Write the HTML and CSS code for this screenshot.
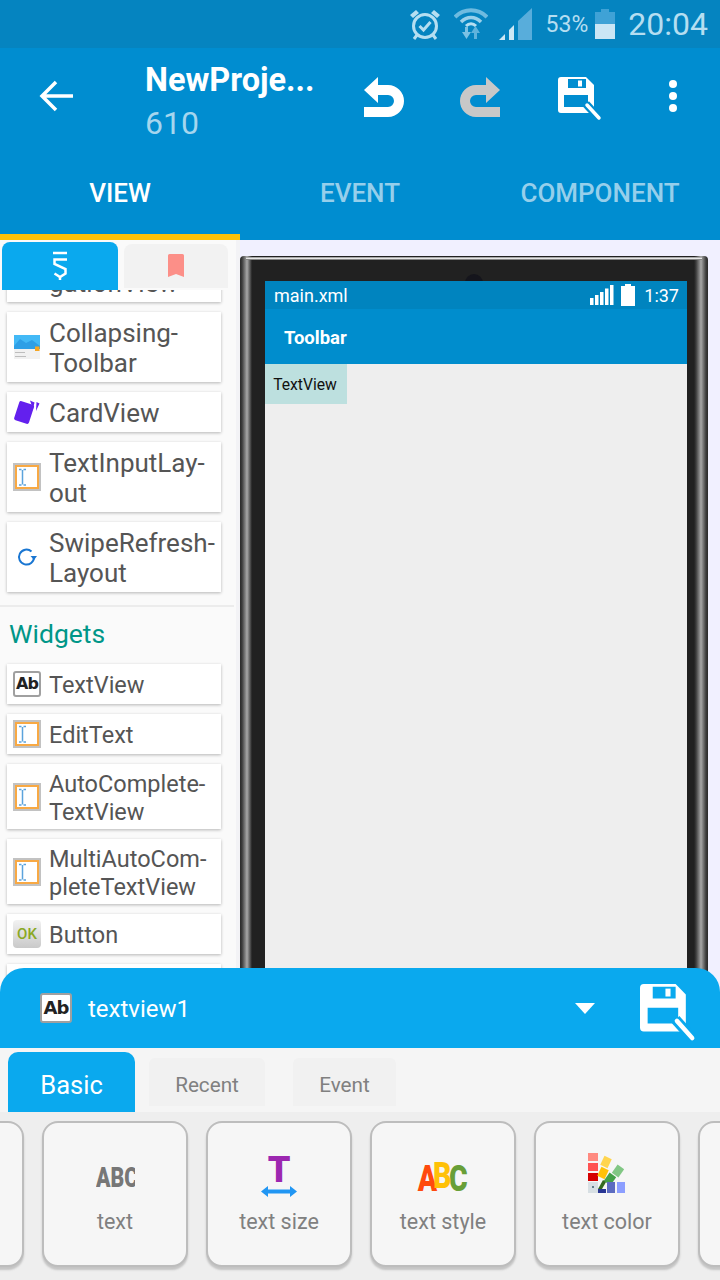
FILE: index.html
```html
<!DOCTYPE html>
<html lang="en">
<head>
    <meta charset="UTF-8">
    <meta name="viewport" content="width=device-width, initial-scale=1.0">
    <title>Sketchware view editor</title>
    <link rel="stylesheet" href="styles.css">
</head>
<body>
    <svg class="defs" width="0" height="0">
        <symbol id="floppy" viewBox="0 0 44 44">
            <path fill="#fff" fill-rule="evenodd" d="M3 0H28L36 8V33a3 3 0 0 1-3 3H3a3 3 0 0 1-3-3V3a3 3 0 0 1 3-3ZM10 2V11H28V2ZM6 18V30H30V18Z"/>
            <rect x="20" y="3.500" width="4" height="6" fill="#fff"/>
            <path d="M28 27L41 41" stroke="var(--halo)" stroke-width="8"/>
            <path d="M29 28L41 41" stroke="#fff" stroke-width="3.500" stroke-linecap="round"/>
        </symbol>
        <symbol id="input" viewBox="0 0 28 28">
            <rect width="28" height="28" fill="#c2c2c2"/>
            <rect x="3" y="3" width="22" height="22" fill="#fff" stroke="#f8a944" stroke-width="2"/>
            <path d="M6 6.500h2.500M13 6.500h-2.500M9.500 7v14.500M6 22h2.500M13 22h-2.500" fill="none" stroke="#5ba3dc" stroke-width="1.500"/>
        </symbol>
    </svg>

    <div class="app">
        <div class="status-bar">
            <svg class="st-alarm" width="32" height="32" viewBox="0 0 32 32" fill="none" stroke="#b5def1">
                <circle cx="16" cy="18" r="11.500" stroke-width="3"/>
                <path d="M10.500 18l4 4 7-8" stroke-width="3"/>
                <path d="M1 7l6-5 3 3-6 5ZM31 7l-6-5-3 3 6 5Z" fill="#b5def1" stroke="none"/>
                <path d="M8 27l-3 4M24 27l3 4" stroke-width="3"/>
            </svg>
            <svg class="st-wifi" width="34" height="34" viewBox="0 0 34 34" fill="none">
                <path d="M1 10C10 1 24 1 33 10" stroke="#6ebbe0" stroke-width="4"/>
                <path d="M7 15C13 9 21 9 27 15" stroke="#9ad0ea" stroke-width="3.500"/>
                <path d="M12 19C15 16 19 16 22 19" stroke="#b5def1" stroke-width="3"/>
                <path d="M8 25h3v-5h3v5h3l-4.500 7Z" fill="#7cc2e4"/>
                <path d="M17 26l4.500-7 4.500 7h-3v6h-3v-6Z" fill="#5fb3dc"/>
            </svg>
            <svg class="st-signal" width="33" height="32" viewBox="0 0 33 32">
                <path d="M0 32L6 26V32Z" fill="#cde8f5"/>
                <path d="M10 22L15 17V32H10Z" fill="#cde8f5"/>
                <path d="M19 13L33 0V32H19Z" fill="#58addb"/>
            </svg>
            <span class="st-percent">53%</span>
            <svg class="st-battery" width="20" height="30" viewBox="0 0 20 30">
                <path d="M0 3H6V0H14V3H20V15H0Z" fill="#3fa2d6"/>
                <rect y="15" width="20" height="15" fill="#cae6f5"/>
            </svg>
            <span class="st-time">20:04</span>
        </div>

        <header class="top-bar">
            <button class="icon-btn back-btn">
                <svg width="36" height="32" viewBox="0 0 36 32" fill="none" stroke="#fff" stroke-width="3.500">
                    <path d="M34 16H3M17 2L3 16L17 30"/>
                </svg>
            </button>
            <div class="title-block">
                <div class="title">NewProje...</div>
                <div class="subtitle">610</div>
            </div>
            <svg class="act-undo" width="40" height="40" viewBox="0 0 40 40">
                <path fill="#fff" d="M0 13L14 0V8H24A16 16 0 0 1 24 40H0V30H24A6 6 0 0 0 24 18H14V26Z"/>
            </svg>
            <svg class="act-redo" width="40" height="40" viewBox="0 0 40 40">
                <path fill="#c8c8c8" d="M40 13L26 0V8H16A16 16 0 0 0 16 40H40V30H16A6 6 0 0 1 16 18H26V26Z"/>
            </svg>
            <svg class="act-save" width="44" height="44"><use href="#floppy"/></svg>
            <div class="act-more"><i></i><i></i><i></i></div>
        </header>

        <nav class="main-tabs">
            <div class="main-tab active">VIEW</div>
            <div class="main-tab">EVENT</div>
            <div class="main-tab">COMPONENT</div>
        </nav>

        <div class="workspace">
            <aside class="palette">
                <div class="palette-tabs">
                    <div class="palette-tab active">
                        <svg width="20" height="30" viewBox="0 0 20 30" fill="none" stroke="#fff" stroke-width="2.500">
                            <path d="M3 2H17"/>
                            <path d="M17 8.500H4.500V13L15.500 18V22.500L10 26L4.500 22.500"/>
                            <path d="M10 26V29"/>
                        </svg>
                    </div>
                    <div class="palette-tab">
                        <svg width="16" height="24" viewBox="0 0 16 24"><path fill="#fc8f88" d="M1.500 0H14.500A1.500 1.500 0 0 1 16 1.500V23L8 20L0 23V1.500A1.500 1.500 0 0 1 1.500 0Z"/></svg>
                    </div>
                </div>
                <div class="palette-scroll">
                    <div class="palette-list">
                        <div class="item tall"><span class="item-icon"></span><span class="item-text">Navi-<br>gationView</span></div>
                        <div class="item tall">
                            <span class="item-icon">
                                <svg width="26" height="24" viewBox="0 0 26 24">
                                    <rect width="26" height="24" fill="#f1f1f1"/>
                                    <rect width="26" height="14" fill="#43b9f6"/>
                                    <path d="M0 11L6 4L12 8L18 5L26 11V14H0Z" fill="#2e9fe6"/>
                                    <rect x="21" y="11.500" width="4.500" height="4.500" fill="#f5a623"/>
                                    <path d="M1 17.500H11M1 21.500H12" stroke="#bdbdbd" stroke-width="1"/>
                                </svg>
                            </span>
                            <span class="item-text">Collapsing-<br>Toolbar</span>
                        </div>
                        <div class="item">
                            <span class="item-icon">
                                <svg width="26" height="24" viewBox="0 0 26 24">
                                    <rect x="2.500" y="2.500" width="15.500" height="20" rx="2" fill="#6320ee" transform="rotate(18 10 12)"/>
                                    <path d="M16 0.500L20.500 2.500L19 9ZM22.500 2L25.500 3.500L22 11Z" fill="#6320ee"/>
                                </svg>
                            </span>
                            <span class="item-text">CardView</span>
                        </div>
                        <div class="item tall">
                            <span class="item-icon"><svg width="28" height="28"><use href="#input"/></svg></span>
                            <span class="item-text">TextInputLay-<br>out</span>
                        </div>
                        <div class="item tall">
                            <span class="item-icon">
                                <svg width="22" height="22" viewBox="0 0 22 22" fill="none">
                                    <path d="M18 11A7.500 7.500 0 1 1 15.500 5.500" stroke="#1976d2" stroke-width="2"/>
                                    <path d="M14.500 10H21L18 14Z" fill="#1976d2"/>
                                </svg>
                            </span>
                            <span class="item-text">SwipeRefresh-<br>Layout</span>
                        </div>
                        <div class="group-title">Widgets</div>
                        <div class="item sm">
                            <span class="item-icon"><span class="ab-box">Ab</span></span>
                            <span class="item-text">TextView</span>
                        </div>
                        <div class="item sm">
                            <span class="item-icon"><svg width="28" height="28"><use href="#input"/></svg></span>
                            <span class="item-text">EditText</span>
                        </div>
                        <div class="item sm mid">
                            <span class="item-icon"><svg width="28" height="28"><use href="#input"/></svg></span>
                            <span class="item-text">AutoComplete-<br>TextView</span>
                        </div>
                        <div class="item sm mid">
                            <span class="item-icon"><svg width="28" height="28"><use href="#input"/></svg></span>
                            <span class="item-text">MultiAutoCom-<br>pleteTextView</span>
                        </div>
                        <div class="item sm">
                            <span class="item-icon"><span class="ok-box">OK</span></span>
                            <span class="item-text">Button</span>
                        </div>
                        <div class="item sm"><span class="item-icon"></span><span class="item-text">ImageView</span></div>
                    </div>
                </div>
            </aside>

            <section class="preview">
                <div class="phone">
                    <i class="phone-edge"></i>
                    <i class="phone-camera"></i>
                    <div class="screen">
                        <div class="screen-status">
                            <span class="screen-file">main.xml</span>
                            <svg width="24" height="20" viewBox="0 0 24 20" fill="#fff">
                                <rect y="13" width="3.500" height="7"/>
                                <rect x="5" y="10" width="3.500" height="10"/>
                                <rect x="10" y="7" width="3.500" height="13"/>
                                <rect x="15" y="3.500" width="3.500" height="16.500"/>
                                <rect x="20" y="0" width="3.500" height="20"/>
                            </svg>
                            <svg class="screen-batt" width="14" height="22" viewBox="0 0 14 22" fill="#fff">
                                <path d="M4 0H10V2H14V22H0V2H4Z"/>
                            </svg>
                            <span class="screen-time">1:37</span>
                        </div>
                        <div class="screen-toolbar">Toolbar</div>
                        <div class="screen-textview">TextView</div>
                    </div>
                </div>
            </section>
        </div>

        <div class="sheet">
            <div class="sheet-head">
                <span class="ab-box ab-box-big">Ab</span>
                <span class="sheet-name">textview1</span>
                <i class="sheet-caret"></i>
                <svg class="sheet-save" width="56" height="58" viewBox="0 0 44 44" preserveAspectRatio="none"><use href="#floppy"/></svg>
            </div>
            <div class="sheet-tabs">
                <div class="sheet-tab active">Basic</div>
                <div class="sheet-tab recent">Recent</div>
                <div class="sheet-tab event">Event</div>
            </div>
            <div class="props">
                <div class="prop"></div>
                <div class="prop">
                    <div class="prop-icon"><span class="abc-clip"><span class="abc-gray">ABC</span></span></div>
                    <div class="prop-label">text</div>
                </div>
                <div class="prop">
                    <div class="prop-icon size-icon">
                        <span class="big-t">T</span>
                        <svg width="36" height="11" viewBox="0 0 36 11">
                            <path fill="#2196f3" d="M0 5.500L7 0V3.500H29V0L36 5.500L29 11V7.500H7V11Z"/>
                        </svg>
                    </div>
                    <div class="prop-label">text size</div>
                </div>
                <div class="prop">
                    <div class="prop-icon"><span class="abc-color"><b class="c-a">A</b><b class="c-b">B</b><b class="c-c">C</b></span></div>
                    <div class="prop-label">text style</div>
                </div>
                <div class="prop">
                    <div class="prop-icon">
                        <svg width="38" height="40" viewBox="0 0 38 40">
                            <rect width="10" height="8" fill="#ff8a80"/>
                            <rect y="10" width="10" height="8" fill="#ff5252"/>
                            <rect y="20" width="10" height="8" fill="#d50000"/>
                            <rect y="29" width="10" height="11" fill="#d7dfe3"/>
                            <rect x="4" y="33" width="2" height="2" fill="#607d8b"/>
                            <rect x="14" y="4" width="8" height="10" fill="#ffd54f" transform="rotate(25 18 9)"/>
                            <rect x="11" y="15" width="8" height="10" fill="#ffc107" transform="rotate(25 15 20)"/>
                            <rect x="26" y="13" width="8" height="10" fill="#81c784" transform="rotate(35 30 18)"/>
                            <rect x="18" y="21" width="8" height="10" fill="#43a047" transform="rotate(35 22 26)"/>
                            <path d="M10 36L15 27L18 29L14 36Z" fill="#33691e"/>
                            <rect x="10" y="36" width="8" height="4" fill="#283593"/>
                            <rect x="19" y="29" width="8" height="11" fill="#5c6bc0"/>
                            <rect x="29" y="29" width="8" height="11" fill="#8c9eff"/>
                        </svg>
                    </div>
                    <div class="prop-label">text color</div>
                </div>
                <div class="prop"></div>
            </div>
        </div>
    </div>
</body>
</html>
```

FILE: styles.css
```css
html, body {
    margin: 0;
    padding: 0;
}
body {
    width: 720px;
    height: 1280px;
    overflow: hidden;
    font-family: Roboto, "Liberation Sans", sans-serif;
    background: #f1f0ff;
}
.defs {
    position: absolute;
}
.app {
    position: relative;
    width: 720px;
    height: 1280px;
    display: flex;
    flex-direction: column;
    overflow: hidden;
    --halo: #008dd0;
}

/* status bar */
.status-bar {
    height: 48px;
    flex: none;
    display: flex;
    align-items: center;
    justify-content: flex-end;
    padding-right: 12px;
    background: #0584c0;
    color: #b5def1;
}
.st-alarm {
    margin-right: 13px;
}
.st-wifi {
    margin-right: 11px;
}
.st-signal {
    margin-right: 14px;
}
.st-percent {
    font-size: 23px;
    margin-right: 7px;
}
.st-battery {
    margin-right: 13px;
}
.st-time {
    font-size: 32px;
}

/* top bar */
.top-bar {
    height: 96px;
    flex: none;
    display: flex;
    align-items: center;
    background: #008dd0;
}
.icon-btn {
    border: 0;
    padding: 0;
    background: none;
}
.back-btn {
    width: 37px;
    height: 32px;
    margin-left: 38px;
    margin-right: 70px;
}
.title-block {
    width: 219px;
    align-self: flex-start;
    padding-top: 14px;
}
.title {
    font-size: 32.500px;
    font-weight: 700;
    line-height: 36px;
    color: #fff;
}
.subtitle {
    font-size: 32px;
    line-height: 44px;
    margin-top: 3px;
    color: #a5d6ee;
}
.act-undo {
    margin-right: 56px;
    margin-top: 2px;
}
.act-redo {
    margin-right: 58px;
    margin-top: 2px;
}
.act-save {
    margin-right: 56px;
    margin-top: 6px;
}
.act-more {
    width: 30px;
    display: flex;
    flex-direction: column;
    align-items: center;
    gap: 4px;
    margin-top: -1px;
}
.act-more i {
    width: 8px;
    height: 8px;
    border-radius: 50%;
    background: #fff;
}

/* main tabs */
.main-tabs {
    height: 96px;
    flex: none;
    display: flex;
    background: #008dd0;
}
.main-tab {
    width: 240px;
    display: flex;
    align-items: center;
    justify-content: center;
    font-size: 26px;
    font-weight: 500;
    color: #96cfeb;
    box-sizing: border-box;
    padding-top: 2px;
}
.main-tab.active {
    color: #fff;
    border-bottom: 6px solid #ffc107;
    padding-top: 8px;
}

/* palette */
.workspace {
    flex: 1;
    display: flex;
    min-height: 0;
}
.palette {
    width: 240px;
    flex: none;
    box-sizing: border-box;
    display: flex;
    flex-direction: column;
    background: #fafafa;
    border-right: 4px solid #f3f3f6;
}
.palette-tabs {
    height: 50px;
    flex: none;
    display: flex;
    padding: 2px 0 0 2px;
    box-sizing: border-box;
    gap: 6px;
    position: relative;
    z-index: 2;
    background: #fafafa;
}
.palette-tab {
    width: 104px;
    height: 44px;
    margin-top: 2px;
    border-radius: 8px 8px 0 0;
    background: #f2f2f2;
    display: flex;
    align-items: center;
    justify-content: center;
}
.palette-tab.active {
    width: 116px;
    height: 48px;
    margin-top: 0;
    background: #0aa9ee;
}
.palette-scroll {
    flex: 1;
    overflow: hidden;
    min-height: 0;
}
.palette-list {
    margin-top: -58px;
    padding-left: 7px;
    display: flex;
    flex-direction: column;
    gap: 10px;
}
.item {
    width: 214px;
    height: 40px;
    flex: none;
    display: flex;
    align-items: center;
    background: #fff;
    box-shadow: 0 1px 3px rgba(0, 0, 0, 0.28);
    font-size: 26px;
    line-height: 30px;
    color: #555;
}
.item.tall {
    height: 70px;
}
.item.sm {
    font-size: 23.500px;
}
.item.mid {
    height: 65px;
    line-height: 28px;
}
.item-icon {
    width: 28px;
    margin-left: 6px;
    margin-right: 8px;
    flex: none;
    display: flex;
    align-items: center;
    justify-content: center;
}
.item-text {
    white-space: nowrap;
    padding-top: 1px;
}
.item.sm .item-text {
    padding-top: 2px;
}
.group-title {
    font-size: 26.500px;
    line-height: 30px;
    color: #009688;
    margin: 3px 0 0 -7px;
    padding: 12px 0 5px 9px;
    width: 234px;
    box-sizing: border-box;
    border-top: 2px solid #ececec;
}
.ab-box {
    width: 28px;
    height: 26px;
    box-sizing: border-box;
    border: 2px solid #a0a0a0;
    border-radius: 3px;
    background: #fff;
    display: inline-flex;
    align-items: center;
    justify-content: center;
    font-size: 16px;
    font-weight: 700;
    line-height: 1;
    color: #222;
    font-family: "DejaVu Sans", sans-serif;
    letter-spacing: -1px;
}
.ab-box-big {
    width: 32px;
    height: 30px;
    font-size: 18px;
    flex: none;
}
.ok-box {
    width: 28px;
    height: 28px;
    border-radius: 4px;
    background: linear-gradient(#f2f2f2, #c9c9c9);
    display: inline-flex;
    align-items: center;
    justify-content: center;
    font-size: 15px;
    font-weight: 500;
    color: #8aa825;
}

/* phone preview */
.preview {
    flex: 1;
    padding: 16px 12px 0 0;
    min-width: 0;
    background: #f1f0ff;
}
.phone {
    position: relative;
    height: 800px;
    box-sizing: border-box;
    padding: 25px 21px 0 25px;
    border-radius: 4px 4px 0 0;
    background:
        linear-gradient(90deg, #2a2a2a 0, #3c3c3c 2px, #a8a8a8 7px, #3c3c3c 11px, #212121 12px) left top / 14px 100% no-repeat,
        linear-gradient(90deg, #212121 0, #3c3c3c 2px, #a8a8a8 7px, #3c3c3c 12px, #2a2a2a 14px) right top / 14px 100% no-repeat,
        #212121;
}
.phone-edge {
    position: absolute;
    left: 6px;
    right: 6px;
    top: 1px;
    height: 3px;
    background: linear-gradient(#8a8a8a, #e6e6e6, #555);
}
.phone-camera {
    position: absolute;
    left: 225px;
    top: 18px;
    width: 18px;
    height: 18px;
    border-radius: 50%;
    background: #15151c;
}
.screen {
    position: relative;
    height: 100%;
    background: #eeeeee;
}
.screen-status {
    height: 28px;
    display: flex;
    align-items: center;
    gap: 8px;
    padding: 0 8px 0 9px;
    background: #0084bf;
    color: #fff;
    font-size: 18px;
}
.screen-file {
    flex: 1;
}
.screen-batt {
    margin-left: -1px;
}
.screen-time {
    margin-left: 1px;
}
.screen-toolbar {
    height: 55px;
    display: flex;
    align-items: center;
    padding: 2px 0 0 19px;
    box-sizing: border-box;
    background: #008dcd;
    color: #fff;
    font-size: 18.500px;
    font-weight: 700;
}
.screen-textview {
    width: 82px;
    height: 40px;
    display: flex;
    align-items: center;
    justify-content: center;
    padding: 1px 2px 0 0;
    box-sizing: border-box;
    background: #bde0df;
    color: #111;
    font-size: 15.700px;
}

/* bottom sheet */
.sheet {
    position: absolute;
    left: 0;
    right: 0;
    bottom: 0;
    height: 312px;
    display: flex;
    flex-direction: column;
    --halo: #0aa9ee;
}
.sheet-head {
    height: 80px;
    flex: none;
    display: flex;
    align-items: center;
    padding-left: 40px;
    box-sizing: border-box;
    border-radius: 24px 24px 0 0;
    background: #0aa9ee;
}
.sheet-name {
    flex: 1;
    margin-left: 16px;
    font-size: 24px;
    color: #fff;
    margin-top: 2px;
}
.sheet-caret {
    width: 0;
    height: 0;
    border-left: 10px solid transparent;
    border-right: 10px solid transparent;
    border-top: 11px solid #fff;
    margin-right: 45px;
}
.sheet-save {
    margin-right: 24px;
    margin-top: 10px;
}
.sheet-tabs {
    height: 64px;
    flex: none;
    display: flex;
    align-items: flex-start;
    padding-left: 8px;
    box-sizing: border-box;
    background: #f5f5f5;
}
.sheet-tab {
    display: flex;
    align-items: center;
    justify-content: center;
    height: 48px;
    padding-top: 6px;
    box-sizing: border-box;
    margin-top: 10px;
    border-radius: 6px 6px 0 0;
    background: #f1f1f1;
    color: #808080;
    font-size: 20.700px;
}
.sheet-tab.active {
    width: 127px;
    height: 60px;
    margin-top: 4px;
    border-radius: 10px 10px 0 0;
    background: #0aa9ee;
    color: #fff;
    font-size: 25.500px;
}
.sheet-tab.recent {
    width: 116px;
    margin-left: 14px;
}
.sheet-tab.event {
    width: 103px;
    margin-left: 28px;
}
.props {
    flex: 1;
    display: flex;
    gap: 18px;
    padding: 9px 0 0 0;
    margin-left: -122px;
    background: #eeeeee;
}
.prop {
    width: 146px;
    height: 146px;
    flex: none;
    box-sizing: border-box;
    border: 2px solid #bdbdbd;
    border-radius: 16px;
    background: #f6f6f6;
    box-shadow: 0 3px 2px #c4c4c4;
    display: flex;
    flex-direction: column;
    align-items: center;
    color: #808080;
}
.prop-icon {
    height: 52px;
    margin-top: 24px;
    display: flex;
    align-items: center;
    justify-content: center;
}
.prop-label {
    margin-top: 10px;
    font-size: 21.500px;
    line-height: 26px;
    white-space: nowrap;
}
.abc-clip {
    display: block;
    width: 39px;
    height: 30px;
    overflow: hidden;
    margin-top: 9px;
}
.abc-gray {
    display: block;
    line-height: 30px;
    font-size: 28px;
    font-weight: 900;
    white-space: nowrap;
    color: #777;
    transform: scaleX(0.76);
    transform-origin: left center;
}
.size-icon {
    flex-direction: column;
    margin-top: 34px;
    height: 42px;
    justify-content: flex-start;
}
.size-icon > * {
    flex: none;
}
.big-t {
    font-size: 36px;
    line-height: 26px;
    font-weight: 900;
    color: #9c27b0;
    margin-bottom: 3px;
}
.abc-color {
    display: block;
    font-size: 36px;
    line-height: 40px;
    white-space: nowrap;
    margin-top: 12px;
    transform: scaleX(0.79);
}
.abc-color b {
    font-weight: 900;
}
.c-a {
    color: #ff4a0d;
}
.c-b {
    color: #ffc107;
    margin-left: -5px;
    position: relative;
    top: -3px;
}
.c-c {
    color: #689f38;
    margin-left: -3px;
}
```
